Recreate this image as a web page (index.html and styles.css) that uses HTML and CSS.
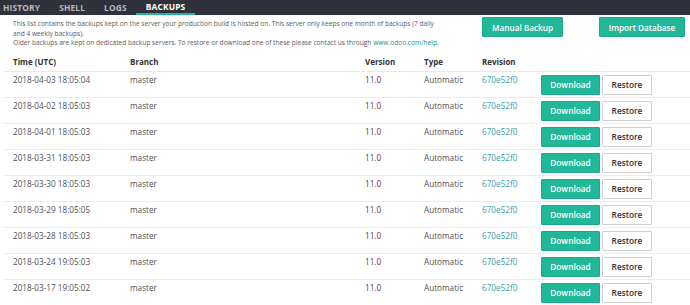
FILE: index.html
```html
<!DOCTYPE html>
<html>
<head>
<meta charset="utf-8">
<link rel="stylesheet" href="styles.css">
</head>
<body>
<nav class="tabs">
  <a class="tab first">HISTORY</a>
  <a class="tab">SHELL</a>
  <a class="tab">LOGS</a>
  <a class="tab active">BACKUPS</a>
</nav>
<section class="intro">
  <div class="intro-text">
    <span class="line">This list contains the backups kept on the server your production build is hosted on. This server only keeps one month of backups (7 daily</span>
    <span class="line">and 4 weekly backups).</span>
    <span class="line">Older backups are kept on dedicated backup servers. To restore or download one of these please contact us through <a class="link">www.odoo.com/help</a>.</span>
  </div>
  <div class="intro-actions">
    <button class="btn btn-primary btn-big">Manual Backup</button>
    <button class="btn btn-primary btn-big">Import Database</button>
  </div>
</section>
<table class="backups">
  <colgroup>
    <col class="c-time"><col class="c-branch"><col class="c-version"><col class="c-type"><col class="c-rev"><col>
  </colgroup>
  <thead>
    <tr><th>Time (UTC)</th><th>Branch</th><th>Version</th><th>Type</th><th>Revision</th><th></th></tr>
  </thead>
  <tbody>
    <tr><td>2018-04-03 18:05:04</td><td>master</td><td class="ver">11.0</td><td>Automatic</td><td class="rev">670e52f0</td><td><div class="acts"><button class="btn btn-primary">Download</button><button class="btn btn-default">Restore</button></div></td></tr>
    <tr><td>2018-04-02 18:05:03</td><td>master</td><td class="ver">11.0</td><td>Automatic</td><td class="rev">670e52f0</td><td><div class="acts"><button class="btn btn-primary">Download</button><button class="btn btn-default">Restore</button></div></td></tr>
    <tr><td>2018-04-01 18:05:03</td><td>master</td><td class="ver">11.0</td><td>Automatic</td><td class="rev">670e52f0</td><td><div class="acts"><button class="btn btn-primary">Download</button><button class="btn btn-default">Restore</button></div></td></tr>
    <tr><td>2018-03-31 18:05:03</td><td>master</td><td class="ver">11.0</td><td>Automatic</td><td class="rev">670e52f0</td><td><div class="acts"><button class="btn btn-primary">Download</button><button class="btn btn-default">Restore</button></div></td></tr>
    <tr><td>2018-03-30 18:05:03</td><td>master</td><td class="ver">11.0</td><td>Automatic</td><td class="rev">670e52f0</td><td><div class="acts"><button class="btn btn-primary">Download</button><button class="btn btn-default">Restore</button></div></td></tr>
    <tr><td>2018-03-29 18:05:05</td><td>master</td><td class="ver">11.0</td><td>Automatic</td><td class="rev">670e52f0</td><td><div class="acts"><button class="btn btn-primary">Download</button><button class="btn btn-default">Restore</button></div></td></tr>
    <tr><td>2018-03-28 18:05:03</td><td>master</td><td class="ver">11.0</td><td>Automatic</td><td class="rev">670e52f0</td><td><div class="acts"><button class="btn btn-primary">Download</button><button class="btn btn-default">Restore</button></div></td></tr>
    <tr><td>2018-03-24 19:05:03</td><td>master</td><td class="ver">11.0</td><td>Automatic</td><td class="rev">670e52f0</td><td><div class="acts"><button class="btn btn-primary">Download</button><button class="btn btn-default">Restore</button></div></td></tr>
    <tr><td>2018-03-17 19:05:02</td><td>master</td><td class="ver">11.0</td><td>Automatic</td><td class="rev">670e52f0</td><td><div class="acts"><button class="btn btn-primary">Download</button><button class="btn btn-default">Restore</button></div></td></tr>
  </tbody>
</table>
</body>
</html>
```

FILE: styles.css
```css
* { box-sizing: border-box; }
html, body { margin: 0; padding: 0; background: #fff; }
body {
  font-family: "Open Sans", "DejaVu Sans", sans-serif;
  color: #4c4c4c;
  overflow: hidden;
}
.tabs {
  display: flex;
  height: 15px;
  background: #2f323a;
}
.tab {
  display: block;
  padding: 0 9.5px;
  font-size: 8.4px;
  font-weight: 700;
  line-height: 15px;
  color: #b6b8bc;
  letter-spacing: 0.15px;
}
.tab.first { padding-left: 3px; }
.tab.active {
  color: #fff;
  border-bottom: 2px solid #21b799;
  line-height: 13px;
}
.intro {
  display: flex;
  justify-content: space-between;
  padding: 2px 5px 0 13px;
}
.intro-text {
  padding-top: 2px;
  font-size: 6.6px;
  line-height: 9.5px;
  color: #5c5c5c;
}
.intro-text .line { display: block; white-space: nowrap; }
.link { color: #1e8e93; }
.intro-actions {
  display: flex;
  gap: 36px;
  align-items: flex-start;
}
.btn {
  font-family: "Open Sans", "DejaVu Sans", sans-serif;
  height: 20px;
  border-radius: 1px;
  font-size: 8px;
  font-weight: 600;
  padding: 0;
  cursor: pointer;
}
.btn-primary {
  background: #21b799;
  border: 1px solid #1ea88b;
  color: #fff;
}
.btn-default {
  background: #fff;
  border: 1px solid #cfcfcf;
  color: #333;
}
.btn-big { width: 81px; font-size: 8.2px; }
.intro-actions .btn-big + .btn-big { width: 86px; }
.backups {
  margin: 6px 0 0 4px;
  width: 686px;
  border-collapse: collapse;
  table-layout: fixed;
  font-size: 8.2px;
}
.c-time { width: 117px; }
.c-branch { width: 235px; }
.c-version { width: 59px; }
.c-type { width: 58px; }
.c-rev { width: 59px; }
th {
  text-align: left;
  font-weight: 700;
  font-size: 8px;
  color: #333;
  padding: 3px 9px 4px;
  line-height: 10px;
  height: 17px;
  border-bottom: 1px solid #e9e9e9;
}
td {
  vertical-align: top;
  padding: 3px 9px 0;
  line-height: 10px;
  height: 26px;
  border-bottom: 1px solid #ececec;
  white-space: nowrap;
  color: #505050;
}
td.ver { color: #6b2f40; }
td.rev { color: #3a9ea6; }
.acts { display: flex; gap: 2px; }
.acts .btn { font-size: 8.3px; }
.acts .btn-primary { width: 59px; }
.acts .btn-default { width: 50px; }
```
